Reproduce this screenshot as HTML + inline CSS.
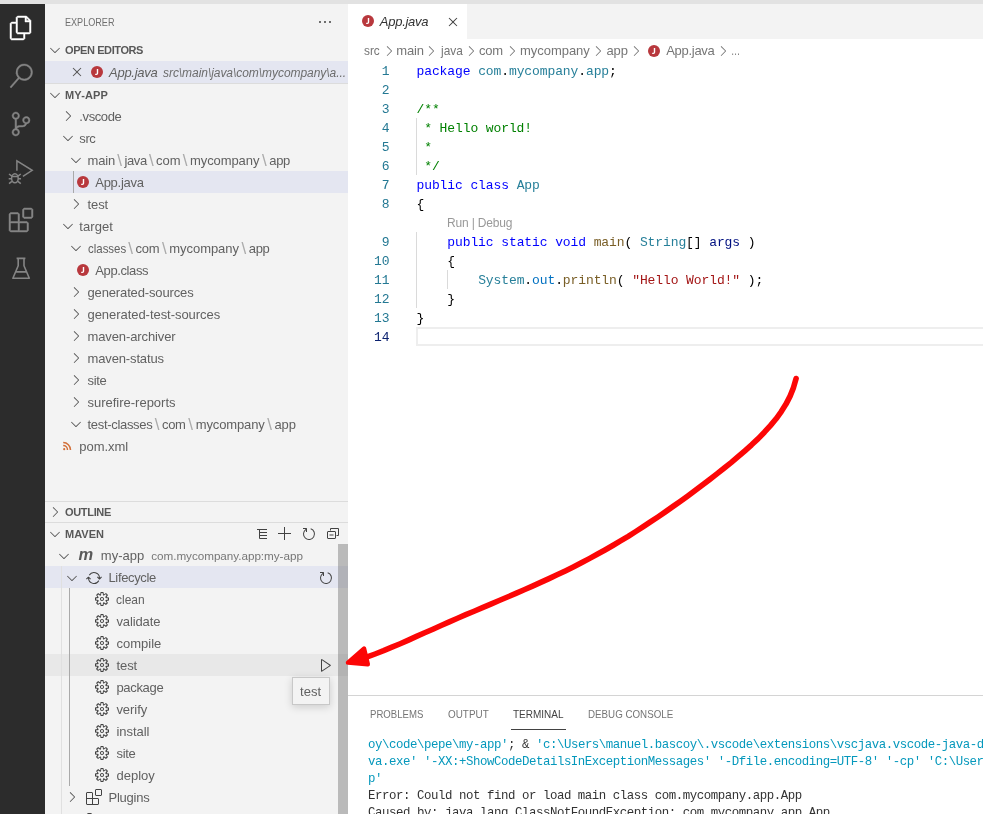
<!DOCTYPE html>
<html lang="en"><head><meta charset="utf-8"><title>VS Code - Maven</title>
<style>
html,body{margin:0;padding:0}
body{width:983px;height:814px;position:relative;overflow:hidden;background:#ffffff;font-family:"Liberation Sans", sans-serif;}
#bg,#fg{position:absolute;left:0;top:0;width:983px;height:814px;overflow:hidden}
#fg{will-change:transform}
.r{position:absolute}
.ic{position:absolute;display:block;overflow:visible}
.t{position:absolute;white-space:pre;line-height:22px;height:22px}
.ln{position:absolute;left:350px;width:39.5px;text-align:right;font-family:"Liberation Mono", monospace;font-size:13px;letter-spacing:-0.1px;line-height:19px;height:19px;white-space:pre}
.code{position:absolute;left:416.5px;font-family:"Liberation Mono", monospace;font-size:13px;letter-spacing:-0.1px;line-height:19px;height:19px;white-space:pre}
.term{position:absolute;left:368px;font-family:"Liberation Mono", monospace;font-size:12.4px;letter-spacing:-0.44px;line-height:17px;height:17px;white-space:pre}
</style></head>
<body>
<div id="bg">
<div class="r" style="left:0px;top:0px;width:983px;height:4px;background:#e2e2e2;"></div>
<div class="r" style="left:0px;top:4px;width:45px;height:810px;background:#2c2c2c;"></div>
<div class="r" style="left:45px;top:4px;width:303px;height:810px;background:#f3f3f3;"></div>
<div class="r" style="left:348px;top:4px;width:635px;height:35px;background:#f3f3f3;"></div>
<div class="r" style="left:348px;top:4px;width:119px;height:35px;background:#ffffff;"></div>
<div class="r" style="left:45px;top:61px;width:303px;height:22px;background:#e4e6f1;"></div>
<div class="r" style="left:45px;top:83px;width:303px;height:1px;background:#dcdcdc;"></div>
<div class="r" style="left:45px;top:171px;width:303px;height:22px;background:#e4e6f1;"></div>
<div class="r" style="left:73px;top:171px;width:1px;height:22px;background:#a9a9a9;"></div>
<div class="r" style="left:45px;top:501px;width:303px;height:1px;background:#dcdcdc;"></div>
<div class="r" style="left:45px;top:522px;width:303px;height:1px;background:#dcdcdc;"></div>
<div class="r" style="left:45px;top:566px;width:303px;height:22px;background:#e4e6f1;"></div>
<div class="r" style="left:45px;top:654px;width:303px;height:22px;background:#e8e8e8;"></div>
<div class="r" style="left:61px;top:566px;width:1px;height:248px;background:#e0e0e0;"></div>
<div class="r" style="left:69px;top:588px;width:1px;height:198px;background:#a9a9a9;"></div>
<div class="r" style="left:86.8px;top:812.6px;width:5.5px;height:3px;background:#424242;border-radius:1.5px 1.5px 0 0"></div>
<div class="r" style="left:338px;top:544px;width:10px;height:270px;background:rgba(100,100,100,0.4);"></div>
<div class="r" style="left:291.5px;top:676.5px;width:38px;height:28px;background:#f3f3f3;border:1px solid #c8c8c8;box-sizing:border-box;box-shadow:0 2px 8px rgba(0,0,0,0.16)"></div>
<div class="r" style="left:416px;top:327px;width:580px;height:19px;box-sizing:border-box;border:2px solid #eeeeee;"></div>
<div class="r" style="left:416px;top:118px;width:1px;height:57px;background:#dadada;"></div>
<div class="r" style="left:416px;top:232px;width:1px;height:76px;background:#dadada;"></div>
<div class="r" style="left:447px;top:270px;width:1px;height:19px;background:#dadada;"></div>
<div class="r" style="left:348px;top:695px;width:635px;height:1px;background:#d4d4d4;"></div>
<div class="r" style="left:511px;top:729px;width:55px;height:1px;background:#424242;"></div>
</div>
<div id="fg">
<svg class="ic" style="left:9px;top:16px" viewBox="0 0 24 24" width="24" height="24"><path fill="#ffffff" stroke="#ffffff" stroke-width="0.45" d="M17.5 0h-9L7 1.5V6H2.5L1 7.5v15.07L2.5 24h12.07L16 22.57V18h4.7l1.3-1.43V4.5L17.5 0zm0 2.12l2.38 2.38H17.5V2.12zm-3 20.38h-12v-15H7v9.07L8.5 18h6v4.5zm6-6h-12v-15H16V6h4.5v10.5z"/></svg>
<svg class="ic" style="left:9px;top:64px" viewBox="0 0 24 24" width="24" height="24"><path fill="#858585" stroke="#858585" stroke-width="0.45" d="M15.25 0a8.25 8.25 0 0 0-6.18 13.72L1 22.88l1.12 1 8.05-9.12A8.251 8.251 0 1 0 15.25.01V0zm0 15a6.75 6.75 0 1 1 0-13.5 6.75 6.75 0 0 1 0 13.5z"/></svg>
<svg class="ic" style="left:9px;top:112px" viewBox="0 0 24 24" width="24" height="24"><path fill="#858585" stroke="#858585" stroke-width="0.45" d="M21.007 8.222A3.738 3.738 0 0 0 15.045 5.2a3.737 3.737 0 0 0 1.156 6.583 2.988 2.988 0 0 1-2.668 1.67h-2.99a4.456 4.456 0 0 0-2.989 1.165V7.4a3.737 3.737 0 1 0-1.494 0v9.117a3.776 3.776 0 1 0 1.816.099 2.99 2.99 0 0 1 2.668-1.667h2.99a4.484 4.484 0 0 0 4.223-3.039 3.736 3.736 0 0 0 3.25-3.687zM4.565 3.738a2.242 2.242 0 1 1 4.484 0 2.242 2.242 0 0 1-4.484 0zm4.484 16.441a2.242 2.242 0 1 1-4.484 0 2.242 2.242 0 0 1 4.484 0zm8.221-9.715a2.242 2.242 0 1 1 0-4.485 2.242 2.242 0 0 1 0 4.485z"/></svg>
<svg class="ic" style="left:9px;top:159px" viewBox="0 0 24 24" width="24" height="24" fill="none" stroke="#858585" stroke-width="1.5"><path d="M7.900 11.800V1.800l15.300 9.500-9.300 6"/><ellipse cx="5.900" cy="19.300" rx="3.300" ry="4.500"/><path d="M2.800 17.600h6.200M-0.300 19.800h3M9 19.800h3M0 15l2.900 2.200M11.800 15L8.900 17.200M0 24.600l2.900-2.200M11.800 24.600L8.900 22.400"/></svg>
<svg class="ic" style="left:9px;top:207.6px" viewBox="0 0 24 24" width="24" height="24"><path fill="#858585" stroke="#858585" stroke-width="0.45" d="M13.5 1.5L15 0h7.5L24 1.5V9l-1.5 1.5H15L13.500 9V1.500zm1.500 0V9h7.500V1.500H15zM0 15V6l1.500-1.500H9L10.500 6v7.500H18l1.500 1.500v7.500L18 24H1.500L0 22.500V15zm9-1.500V6H1.500v7.500H9zM9 15H1.500v7.500H9V15zm1.500 7.500H18V15h-7.500v7.500z"/></svg>
<svg class="ic" style="left:9px;top:255.500px" viewBox="0 0 24 24" width="24" height="24" fill="none" stroke="#858585" stroke-width="1.6" stroke-linejoin="round"><path d="M7.600 2.400h8.800M9.200 2.400v7.400L3.900 22.300h16.400L15 9.800V2.400M6.500 15.900h11.200"/></svg>
<div class="t " style="left:65.4px;top:11.100000000000001px;font-size:11px;color:#6f6f6f;transform:scaleX(0.8261);transform-origin:0 50%;">EXPLORER</div>
<svg class="ic" style="left:317px;top:14.3px" viewBox="0 0 16 16" width="16" height="16"><path fill="#424242" d="M4 8a1 1 0 1 1-2 0 1 1 0 0 1 2 0zm5 0a1 1 0 1 1-2 0 1 1 0 0 1 2 0zm5 0a1 1 0 1 1-2 0 1 1 0 0 1 2 0z"/></svg>
<svg class="ic" style="left:47px;top:42px" viewBox="0 0 16 16" width="16" height="16"><path fill="#5a5a5a" d="M7.976 10.072l4.357-4.357.62.618L8.284 11h-.618L3 6.333l.619-.618 4.357 4.357z"/></svg>
<div class="t " style="left:65px;top:38.8px;font-size:11px;color:#585858;letter-spacing:-0.411px;font-weight:bold;">OPEN EDITORS</div>
<svg class="ic" style="left:69px;top:64px" viewBox="0 0 16 16" width="16" height="16"><path fill="#555555" d="M8 8.707l3.646 3.647.708-.707L8.707 8l3.647-3.646-.707-.708L8 7.293 4.354 3.646l-.707.708L7.293 8l-3.646 3.646.707.708L8 8.707z"/></svg>
<svg class="ic" style="left:89px;top:64px" viewBox="0 0 16 16" width="16" height="16"><circle cx="8" cy="8" r="6" fill="#b8383d"/><path d="M9.200 5v4.100c0 1.300-.7 1.950-1.900 1.950-.5 0-.9-.08-1.250-.25l.25-1.150c.25.120.5.200.8.200.45 0 .7-.2.7-.85V5z" fill="#fff"/></svg>
<div class="t " style="left:109px;top:61.8px;font-size:13px;color:#616161;letter-spacing:-0.262px;font-style:italic;">App.java</div>
<div class="t " style="left:163px;top:62.0px;font-size:12px;color:#6c6c6c;letter-spacing:-0.054px;font-style:italic;">src\main\java\com\mycompany\a...</div>
<svg class="ic" style="left:47px;top:87.2px" viewBox="0 0 16 16" width="16" height="16"><path fill="#5a5a5a" d="M7.976 10.072l4.357-4.357.62.618L8.284 11h-.618L3 6.333l.619-.618 4.357 4.357z"/></svg>
<div class="t " style="left:65px;top:84.0px;font-size:11px;color:#585858;letter-spacing:0.119px;font-weight:bold;">MY-APP</div>
<svg class="ic" style="left:59.5px;top:108px" viewBox="0 0 16 16" width="16" height="16"><path fill="#555555" d="M10.072 8.024L5.715 3.667l.618-.62L11 7.716v.618L6.333 13l-.618-.619 4.357-4.357z"/></svg>
<div class="t " style="left:79.3px;top:105.8px;font-size:13px;color:#616161;letter-spacing:-0.387px;">.vscode</div>
<svg class="ic" style="left:59.5px;top:130px" viewBox="0 0 16 16" width="16" height="16"><path fill="#555555" d="M7.976 10.072l4.357-4.357.62.618L8.284 11h-.618L3 6.333l.619-.618 4.357 4.357z"/></svg>
<div class="t " style="left:79.3px;top:127.8px;font-size:13px;color:#616161;letter-spacing:-0.381px;">src</div>
<svg class="ic" style="left:68px;top:152px" viewBox="0 0 16 16" width="16" height="16"><path fill="#555555" d="M7.976 10.072l4.357-4.357.62.618L8.284 11h-.618L3 6.333l.619-.618 4.357 4.357z"/></svg>
<div class="t " style="left:87.5px;top:149.8px;font-size:13px;color:#616161;letter-spacing:-0.147px;">main</div>
<div class="t " style="left:124.4px;top:149.8px;font-size:13px;color:#616161;letter-spacing:-0.34px;">java</div>
<div class="t" style="left:117.3px;top:150px;font-size:17px;color:#ababab">\</div>
<div class="t " style="left:156.1px;top:149.8px;font-size:13px;color:#616161;letter-spacing:-0.087px;">com</div>
<div class="t" style="left:149.1px;top:150px;font-size:17px;color:#ababab">\</div>
<div class="t " style="left:190px;top:149.8px;font-size:13px;color:#616161;letter-spacing:-0.086px;">mycompany</div>
<div class="t" style="left:182.8px;top:150px;font-size:17px;color:#ababab">\</div>
<div class="t " style="left:269.3px;top:149.8px;font-size:13px;color:#616161;letter-spacing:-0.401px;">app</div>
<div class="t" style="left:261.9px;top:150px;font-size:17px;color:#ababab">\</div>
<svg class="ic" style="left:75px;top:174px" viewBox="0 0 16 16" width="16" height="16"><circle cx="8" cy="8" r="6" fill="#b8383d"/><path d="M9.200 5v4.100c0 1.300-.7 1.950-1.900 1.950-.5 0-.9-.08-1.250-.25l.25-1.150c.25.120.5.200.8.200.45 0 .7-.2.7-.85V5z" fill="#fff"/></svg>
<div class="t " style="left:95.3px;top:171.8px;font-size:13px;color:#616161;letter-spacing:-0.287px;">App.java</div>
<svg class="ic" style="left:68px;top:196px" viewBox="0 0 16 16" width="16" height="16"><path fill="#555555" d="M10.072 8.024L5.715 3.667l.618-.62L11 7.716v.618L6.333 13l-.618-.619 4.357-4.357z"/></svg>
<div class="t " style="left:87.5px;top:193.8px;font-size:13px;color:#616161;letter-spacing:-0.092px;">test</div>
<svg class="ic" style="left:59.5px;top:218px" viewBox="0 0 16 16" width="16" height="16"><path fill="#555555" d="M7.976 10.072l4.357-4.357.62.618L8.284 11h-.618L3 6.333l.619-.618 4.357 4.357z"/></svg>
<div class="t " style="left:79.3px;top:215.8px;font-size:13px;color:#616161;letter-spacing:0.058px;">target</div>
<svg class="ic" style="left:68px;top:240px" viewBox="0 0 16 16" width="16" height="16"><path fill="#555555" d="M7.976 10.072l4.357-4.357.62.618L8.284 11h-.618L3 6.333l.619-.618 4.357 4.357z"/></svg>
<div class="t " style="left:87.5px;top:237.8px;font-size:13px;color:#616161;transform:scaleX(0.8810);transform-origin:0 50%;">classes</div>
<div class="t " style="left:135.5px;top:237.8px;font-size:13px;color:#616161;letter-spacing:-0.254px;">com</div>
<div class="t" style="left:128.2px;top:238px;font-size:17px;color:#ababab">\</div>
<div class="t " style="left:169.3px;top:237.8px;font-size:13px;color:#616161;letter-spacing:-0.053px;">mycompany</div>
<div class="t" style="left:161.9px;top:238px;font-size:17px;color:#ababab">\</div>
<div class="t " style="left:248.7px;top:237.8px;font-size:13px;color:#616161;letter-spacing:-0.268px;">app</div>
<div class="t" style="left:241.4px;top:238px;font-size:17px;color:#ababab">\</div>
<svg class="ic" style="left:75px;top:262px" viewBox="0 0 16 16" width="16" height="16"><circle cx="8" cy="8" r="6" fill="#b8383d"/><path d="M9.200 5v4.100c0 1.300-.7 1.950-1.900 1.950-.5 0-.9-.08-1.250-.25l.25-1.150c.25.120.5.200.8.200.45 0 .7-.2.7-.85V5z" fill="#fff"/></svg>
<div class="t " style="left:95.3px;top:259.8px;font-size:13px;color:#616161;letter-spacing:-0.397px;">App.class</div>
<svg class="ic" style="left:68px;top:284px" viewBox="0 0 16 16" width="16" height="16"><path fill="#555555" d="M10.072 8.024L5.715 3.667l.618-.62L11 7.716v.618L6.333 13l-.618-.619 4.357-4.357z"/></svg>
<div class="t " style="left:87.5px;top:281.8px;font-size:13px;color:#616161;letter-spacing:-0.142px;">generated-sources</div>
<svg class="ic" style="left:68px;top:306px" viewBox="0 0 16 16" width="16" height="16"><path fill="#555555" d="M10.072 8.024L5.715 3.667l.618-.62L11 7.716v.618L6.333 13l-.618-.619 4.357-4.357z"/></svg>
<div class="t " style="left:87.5px;top:303.8px;font-size:13px;color:#616161;letter-spacing:-0.049px;">generated-test-sources</div>
<svg class="ic" style="left:68px;top:328px" viewBox="0 0 16 16" width="16" height="16"><path fill="#555555" d="M10.072 8.024L5.715 3.667l.618-.62L11 7.716v.618L6.333 13l-.618-.619 4.357-4.357z"/></svg>
<div class="t " style="left:87.5px;top:325.8px;font-size:13px;color:#616161;letter-spacing:-0.114px;">maven-archiver</div>
<svg class="ic" style="left:68px;top:350px" viewBox="0 0 16 16" width="16" height="16"><path fill="#555555" d="M10.072 8.024L5.715 3.667l.618-.62L11 7.716v.618L6.333 13l-.618-.619 4.357-4.357z"/></svg>
<div class="t " style="left:87.5px;top:347.8px;font-size:13px;color:#616161;letter-spacing:-0.137px;">maven-status</div>
<svg class="ic" style="left:68px;top:372px" viewBox="0 0 16 16" width="16" height="16"><path fill="#555555" d="M10.072 8.024L5.715 3.667l.618-.62L11 7.716v.618L6.333 13l-.618-.619 4.357-4.357z"/></svg>
<div class="t " style="left:87.5px;top:369.8px;font-size:13px;color:#616161;letter-spacing:-0.309px;">site</div>
<svg class="ic" style="left:68px;top:394px" viewBox="0 0 16 16" width="16" height="16"><path fill="#555555" d="M10.072 8.024L5.715 3.667l.618-.62L11 7.716v.618L6.333 13l-.618-.619 4.357-4.357z"/></svg>
<div class="t " style="left:87.5px;top:391.8px;font-size:13px;color:#616161;letter-spacing:-0.009px;">surefire-reports</div>
<svg class="ic" style="left:68px;top:416px" viewBox="0 0 16 16" width="16" height="16"><path fill="#555555" d="M7.976 10.072l4.357-4.357.62.618L8.284 11h-.618L3 6.333l.619-.618 4.357 4.357z"/></svg>
<div class="t " style="left:87.5px;top:413.8px;font-size:13px;color:#616161;letter-spacing:-0.312px;">test-classes</div>
<div class="t " style="left:161.9px;top:413.8px;font-size:13px;color:#616161;letter-spacing:-0.254px;">com</div>
<div class="t" style="left:154.8px;top:414px;font-size:17px;color:#ababab">\</div>
<div class="t " style="left:195.7px;top:413.8px;font-size:13px;color:#616161;letter-spacing:-0.12px;">mycompany</div>
<div class="t" style="left:188.3px;top:414px;font-size:17px;color:#ababab">\</div>
<div class="t " style="left:274.5px;top:413.8px;font-size:13px;color:#616161;letter-spacing:-0.134px;">app</div>
<div class="t" style="left:267.2px;top:414px;font-size:17px;color:#ababab">\</div>
<svg class="ic" style="left:58.5px;top:438px" viewBox="0 0 16 16" width="16" height="16" fill="none" stroke="#d2703a" stroke-width="1.5"><circle cx="5.2" cy="11.2" r="1.1" fill="#d2703a" stroke="none"/><path d="M4.2 7.6a4.3 4.3 0 0 1 4.3 4.3"/><path d="M4.2 4.6a7.3 7.3 0 0 1 7.3 7.3"/></svg>
<div class="t " style="left:79.3px;top:435.8px;font-size:13px;color:#616161;letter-spacing:-0.032px;">pom.xml</div>
<svg class="ic" style="left:47px;top:504px" viewBox="0 0 16 16" width="16" height="16"><path fill="#5a5a5a" d="M10.072 8.024L5.715 3.667l.618-.62L11 7.716v.618L6.333 13l-.618-.619 4.357-4.357z"/></svg>
<div class="t " style="left:65px;top:500.8px;font-size:11px;color:#585858;letter-spacing:-0.326px;font-weight:bold;">OUTLINE</div>
<svg class="ic" style="left:47px;top:526px" viewBox="0 0 16 16" width="16" height="16"><path fill="#5a5a5a" d="M7.976 10.072l4.357-4.357.62.618L8.284 11h-.618L3 6.333l.619-.618 4.357 4.357z"/></svg>
<div class="t " style="left:65px;top:522.8px;font-size:11px;color:#585858;letter-spacing:0.016px;font-weight:bold;">MAVEN</div>
<svg class="ic" style="left:254px;top:526px" viewBox="0 0 16 16" width="16" height="16" fill="none" stroke="#424242" stroke-width="1"><path d="M3 3.500h10M5.500 6.500H13M5.500 9.500H13M5.500 12.500H13M5.500 3.500v9"/></svg>
<svg class="ic" style="left:277px;top:526px" viewBox="0 0 16 16" width="16" height="16"><path fill="#424242" d="M14 7v1H8v6H7V8H1V7h6V1h1v6h6z"/></svg>
<svg class="ic" style="left:301px;top:526px" viewBox="0 0 16 16" width="16" height="16"><path fill="#424242" d="M4.681 3H2V2h3.5l.5.5V6H5V4a5 5 0 1 0 4.53-.761l.302-.954A6 6 0 1 1 4.681 3z"/></svg>
<svg class="ic" style="left:325px;top:526px" viewBox="0 0 16 16" width="16" height="16" fill="none" stroke="#424242" stroke-width="1"><path d="M5.500 4.500v-2h8v7h-2"/><rect x="2.500" y="5.500" width="8" height="7" rx=".5"/><path d="M4.500 9h4"/></svg>
<svg class="ic" style="left:56px;top:547.5px" viewBox="0 0 16 16" width="16" height="16"><path fill="#555555" d="M7.976 10.072l4.357-4.357.62.618L8.284 11h-.618L3 6.333l.619-.618 4.357 4.357z"/></svg>
<div class="t" style="left:78.500px;top:544px;font-size:16.5px;font-weight:bold;font-style:italic;color:#5a5a5a;line-height:20px">m</div>
<div class="t " style="left:100.8px;top:545.3px;font-size:13px;color:#616161;letter-spacing:0.007px;">my-app</div>
<div class="t " style="left:151.2px;top:544.8px;font-size:11.7px;color:#777;letter-spacing:-0.031px;">com.mycompany.app:my-app</div>
<svg class="ic" style="left:64px;top:569.5px" viewBox="0 0 16 16" width="16" height="16"><path fill="#555555" d="M7.976 10.072l4.357-4.357.62.618L8.284 11h-.618L3 6.333l.619-.618 4.357 4.357z"/></svg>
<svg class="ic" style="left:86.3px;top:569.5px" viewBox="0 0 16 16" width="16" height="16"><path fill="#424242" d="M2.006 8.267L.78 9.5 0 8.73l2.09-2.07.76.01 2.09 2.12-.76.76-1.167-1.18a5 5 0 0 0 9.4 1.983l.813.597a6 6 0 0 1-11.22-2.683zm10.99-.466L11.76 6.55l-.76.76 2.09 2.11.76.01 2.09-2.07-.75-.76-1.194 1.18a6 6 0 0 0-11.11-2.92l.81.594a5 5 0 0 1 9.3 2.346z"/></svg>
<div class="t " style="left:108.5px;top:567.3px;font-size:13px;color:#616161;letter-spacing:-0.364px;">Lifecycle</div>
<svg class="ic" style="left:317.6px;top:569.5px" viewBox="0 0 16 16" width="16" height="16"><path fill="#424242" d="M4.681 3H2V2h3.5l.5.5V6H5V4a5 5 0 1 0 4.53-.761l.302-.954A6 6 0 1 1 4.681 3z"/></svg>
<svg class="ic" style="left:94px;top:590.7px" viewBox="0 0 16 16" width="16" height="16"><path fill="#424242" d="M9.1 4.4L8.6 2H7.4l-.5 2.4-.7.3-2-1.3-.9.8 1.3 2-.2.7-2.4.5v1.2l2.4.5.3.8-1.3 2 .8.8 2-1.3.8.3.4 2.3h1.2l.5-2.4.8-.3 2 1.3.8-.8-1.3-2 .3-.8 2.3-.4V7.4l-2.4-.5-.3-.8 1.3-2-.8-.8-2 1.3-.7-.2zM9.4 1l.5 2.4L12 2.1l2 2-1.4 2.1 2.4.4v2.8l-2.4.5L14 12l-2 2-2.1-1.4-.5 2.4H6.6l-.5-2.4L4 13.9l-2-2 1.4-2.1L1 9.4V6.6l2.4-.5L2.1 4l2-2 2.1 1.4.4-2.4h2.8zm.6 7c0 1.1-.9 2-2 2s-2-.9-2-2 .9-2 2-2 2 .9 2 2zM8 9c.6 0 1-.4 1-1s-.4-1-1-1-1 .4-1 1 .4 1 1 1z"/></svg>
<div class="t " style="left:116.4px;top:588.9px;font-size:13px;color:#616161;transform:scaleX(0.9235);transform-origin:0 50%;">clean</div>
<svg class="ic" style="left:94px;top:612.7px" viewBox="0 0 16 16" width="16" height="16"><path fill="#424242" d="M9.1 4.4L8.6 2H7.4l-.5 2.4-.7.3-2-1.3-.9.8 1.3 2-.2.7-2.4.5v1.2l2.4.5.3.8-1.3 2 .8.8 2-1.3.8.3.4 2.3h1.2l.5-2.4.8-.3 2 1.3.8-.8-1.3-2 .3-.8 2.3-.4V7.4l-2.4-.5-.3-.8 1.3-2-.8-.8-2 1.3-.7-.2zM9.4 1l.5 2.4L12 2.1l2 2-1.4 2.1 2.4.4v2.8l-2.4.5L14 12l-2 2-2.1-1.4-.5 2.4H6.6l-.5-2.4L4 13.9l-2-2 1.4-2.1L1 9.4V6.6l2.4-.5L2.1 4l2-2 2.1 1.4.4-2.4h2.8zm.6 7c0 1.1-.9 2-2 2s-2-.9-2-2 .9-2 2-2 2 .9 2 2zM8 9c.6 0 1-.4 1-1s-.4-1-1-1-1 .4-1 1 .4 1 1 1z"/></svg>
<div class="t " style="left:116.4px;top:610.9px;font-size:13px;color:#616161;letter-spacing:-0.114px;">validate</div>
<svg class="ic" style="left:94px;top:634.7px" viewBox="0 0 16 16" width="16" height="16"><path fill="#424242" d="M9.1 4.4L8.6 2H7.4l-.5 2.4-.7.3-2-1.3-.9.8 1.3 2-.2.7-2.4.5v1.2l2.4.5.3.8-1.3 2 .8.8 2-1.3.8.3.4 2.3h1.2l.5-2.4.8-.3 2 1.3.8-.8-1.3-2 .3-.8 2.3-.4V7.4l-2.4-.5-.3-.8 1.3-2-.8-.8-2 1.3-.7-.2zM9.4 1l.5 2.4L12 2.1l2 2-1.4 2.1 2.4.4v2.8l-2.4.5L14 12l-2 2-2.1-1.4-.5 2.4H6.6l-.5-2.4L4 13.9l-2-2 1.4-2.1L1 9.4V6.6l2.4-.5L2.1 4l2-2 2.1 1.4.4-2.4h2.8zm.6 7c0 1.1-.9 2-2 2s-2-.9-2-2 .9-2 2-2 2 .9 2 2zM8 9c.6 0 1-.4 1-1s-.4-1-1-1-1 .4-1 1 .4 1 1 1z"/></svg>
<div class="t " style="left:116.4px;top:632.9px;font-size:13px;color:#616161;letter-spacing:0.015px;">compile</div>
<svg class="ic" style="left:94px;top:656.7px" viewBox="0 0 16 16" width="16" height="16"><path fill="#424242" d="M9.1 4.4L8.6 2H7.4l-.5 2.4-.7.3-2-1.3-.9.8 1.3 2-.2.7-2.4.5v1.2l2.4.5.3.8-1.3 2 .8.8 2-1.3.8.3.4 2.3h1.2l.5-2.4.8-.3 2 1.3.8-.8-1.3-2 .3-.8 2.3-.4V7.4l-2.4-.5-.3-.8 1.3-2-.8-.8-2 1.3-.7-.2zM9.4 1l.5 2.4L12 2.1l2 2-1.4 2.1 2.4.4v2.8l-2.4.5L14 12l-2 2-2.1-1.4-.5 2.4H6.6l-.5-2.4L4 13.9l-2-2 1.4-2.1L1 9.4V6.6l2.4-.5L2.1 4l2-2 2.1 1.4.4-2.4h2.8zm.6 7c0 1.1-.9 2-2 2s-2-.9-2-2 .9-2 2-2 2 .9 2 2zM8 9c.6 0 1-.4 1-1s-.4-1-1-1-1 .4-1 1 .4 1 1 1z"/></svg>
<div class="t " style="left:116.4px;top:654.9px;font-size:13px;color:#616161;letter-spacing:-0.042px;">test</div>
<svg class="ic" style="left:94px;top:678.7px" viewBox="0 0 16 16" width="16" height="16"><path fill="#424242" d="M9.1 4.4L8.6 2H7.4l-.5 2.4-.7.3-2-1.3-.9.8 1.3 2-.2.7-2.4.5v1.2l2.4.5.3.8-1.3 2 .8.8 2-1.3.8.3.4 2.3h1.2l.5-2.4.8-.3 2 1.3.8-.8-1.3-2 .3-.8 2.3-.4V7.4l-2.4-.5-.3-.8 1.3-2-.8-.8-2 1.3-.7-.2zM9.4 1l.5 2.4L12 2.1l2 2-1.4 2.1 2.4.4v2.8l-2.4.5L14 12l-2 2-2.1-1.4-.5 2.4H6.6l-.5-2.4L4 13.9l-2-2 1.4-2.1L1 9.4V6.6l2.4-.5L2.1 4l2-2 2.1 1.4.4-2.4h2.8zm.6 7c0 1.1-.9 2-2 2s-2-.9-2-2 .9-2 2-2 2 .9 2 2zM8 9c.6 0 1-.4 1-1s-.4-1-1-1-1 .4-1 1 .4 1 1 1z"/></svg>
<div class="t " style="left:116.4px;top:676.9px;font-size:13px;color:#616161;letter-spacing:-0.308px;">package</div>
<svg class="ic" style="left:94px;top:700.7px" viewBox="0 0 16 16" width="16" height="16"><path fill="#424242" d="M9.1 4.4L8.6 2H7.4l-.5 2.4-.7.3-2-1.3-.9.8 1.3 2-.2.7-2.4.5v1.2l2.4.5.3.8-1.3 2 .8.8 2-1.3.8.3.4 2.3h1.2l.5-2.4.8-.3 2 1.3.8-.8-1.3-2 .3-.8 2.3-.4V7.4l-2.4-.5-.3-.8 1.3-2-.8-.8-2 1.3-.7-.2zM9.4 1l.5 2.4L12 2.1l2 2-1.4 2.1 2.4.4v2.8l-2.4.5L14 12l-2 2-2.1-1.4-.5 2.4H6.6l-.5-2.4L4 13.9l-2-2 1.4-2.1L1 9.4V6.6l2.4-.5L2.1 4l2-2 2.1 1.4.4-2.4h2.8zm.6 7c0 1.1-.9 2-2 2s-2-.9-2-2 .9-2 2-2 2 .9 2 2zM8 9c.6 0 1-.4 1-1s-.4-1-1-1-1 .4-1 1 .4 1 1 1z"/></svg>
<div class="t " style="left:116.4px;top:698.9px;font-size:13px;color:#616161;letter-spacing:-0.044px;">verify</div>
<svg class="ic" style="left:94px;top:722.7px" viewBox="0 0 16 16" width="16" height="16"><path fill="#424242" d="M9.1 4.4L8.6 2H7.4l-.5 2.4-.7.3-2-1.3-.9.8 1.3 2-.2.7-2.4.5v1.2l2.4.5.3.8-1.3 2 .8.8 2-1.3.8.3.4 2.3h1.2l.5-2.4.8-.3 2 1.3.8-.8-1.3-2 .3-.8 2.3-.4V7.4l-2.4-.5-.3-.8 1.3-2-.8-.8-2 1.3-.7-.2zM9.4 1l.5 2.4L12 2.1l2 2-1.4 2.1 2.4.4v2.8l-2.4.5L14 12l-2 2-2.1-1.4-.5 2.4H6.6l-.5-2.4L4 13.9l-2-2 1.4-2.1L1 9.4V6.6l2.4-.5L2.1 4l2-2 2.1 1.4.4-2.4h2.8zm.6 7c0 1.1-.9 2-2 2s-2-.9-2-2 .9-2 2-2 2 .9 2 2zM8 9c.6 0 1-.4 1-1s-.4-1-1-1-1 .4-1 1 .4 1 1 1z"/></svg>
<div class="t " style="left:116.4px;top:720.9px;font-size:13px;color:#616161;letter-spacing:-0.036px;">install</div>
<svg class="ic" style="left:94px;top:744.7px" viewBox="0 0 16 16" width="16" height="16"><path fill="#424242" d="M9.1 4.4L8.6 2H7.4l-.5 2.4-.7.3-2-1.3-.9.8 1.3 2-.2.7-2.4.5v1.2l2.4.5.3.8-1.3 2 .8.8 2-1.3.8.3.4 2.3h1.2l.5-2.4.8-.3 2 1.3.8-.8-1.3-2 .3-.8 2.3-.4V7.4l-2.4-.5-.3-.8 1.3-2-.8-.8-2 1.3-.7-.2zM9.4 1l.5 2.4L12 2.1l2 2-1.4 2.1 2.4.4v2.8l-2.4.5L14 12l-2 2-2.1-1.4-.5 2.4H6.6l-.5-2.4L4 13.9l-2-2 1.4-2.1L1 9.4V6.6l2.4-.5L2.1 4l2-2 2.1 1.4.4-2.4h2.8zm.6 7c0 1.1-.9 2-2 2s-2-.9-2-2 .9-2 2-2 2 .9 2 2zM8 9c.6 0 1-.4 1-1s-.4-1-1-1-1 .4-1 1 .4 1 1 1z"/></svg>
<div class="t " style="left:116.4px;top:742.9px;font-size:13px;color:#616161;letter-spacing:-0.259px;">site</div>
<svg class="ic" style="left:94px;top:766.7px" viewBox="0 0 16 16" width="16" height="16"><path fill="#424242" d="M9.1 4.4L8.6 2H7.4l-.5 2.4-.7.3-2-1.3-.9.8 1.3 2-.2.7-2.4.5v1.2l2.4.5.3.8-1.3 2 .8.8 2-1.3.8.3.4 2.3h1.2l.5-2.4.8-.3 2 1.3.8-.8-1.3-2 .3-.8 2.3-.4V7.4l-2.4-.5-.3-.8 1.3-2-.8-.8-2 1.3-.7-.2zM9.4 1l.5 2.4L12 2.1l2 2-1.4 2.1 2.4.4v2.8l-2.4.5L14 12l-2 2-2.1-1.4-.5 2.4H6.6l-.5-2.4L4 13.9l-2-2 1.4-2.1L1 9.4V6.6l2.4-.5L2.1 4l2-2 2.1 1.4.4-2.4h2.8zm.6 7c0 1.1-.9 2-2 2s-2-.9-2-2 .9-2 2-2 2 .9 2 2zM8 9c.6 0 1-.4 1-1s-.4-1-1-1-1 .4-1 1 .4 1 1 1z"/></svg>
<div class="t " style="left:116.4px;top:764.9px;font-size:13px;color:#616161;letter-spacing:0.031px;">deploy</div>
<svg class="ic" style="left:318px;top:656.6px" viewBox="0 0 16 16" width="16" height="16"><path fill="#424242" d="M3.78 2L3 2.41v12l.78.42 9-6V8l-9-6zM4 13.48V3.35l7.6 5.07L4 13.48z"/></svg>
<svg class="ic" style="left:64.3px;top:788.6px" viewBox="0 0 16 16" width="16" height="16"><path fill="#555555" d="M10.072 8.024L5.715 3.667l.618-.62L11 7.716v.618L6.333 13l-.618-.619 4.357-4.357z"/></svg>
<svg class="ic" style="left:86.3px;top:788.5px" viewBox="0 0 24 24" width="16" height="16"><path fill="#424242" d="M13.5 1.5L15 0h7.5L24 1.5V9l-1.5 1.5H15L13.500 9V1.500zm1.500 0V9h7.500V1.500H15zM0 15V6l1.500-1.500H9L10.500 6v7.500H18l1.500 1.500v7.500L18 24H1.500L0 22.500V15zm9-1.500V6H1.500v7.500H9zM9 15H1.500v7.500H9V15zm1.500 7.500H18V15h-7.500v7.500z"/></svg>
<div class="t " style="left:108.5px;top:786.9px;font-size:13px;color:#616161;letter-spacing:-0.249px;">Plugins</div>
<div class="t " style="left:300.1px;top:681.3px;font-size:13px;color:#616161;letter-spacing:0.033px;">test</div>
<svg class="ic" style="left:360px;top:13.2px" viewBox="0 0 16 16" width="16" height="16"><circle cx="8" cy="8" r="6" fill="#b8383d"/><path d="M9.200 5v4.100c0 1.300-.7 1.950-1.900 1.950-.5 0-.9-.08-1.250-.25l.25-1.150c.25.120.5.200.8.200.45 0 .7-.2.7-.85V5z" fill="#fff"/></svg>
<div class="t " style="left:379.8px;top:11.3px;font-size:13px;color:#333333;letter-spacing:-0.262px;font-style:italic;">App.java</div>
<svg class="ic" style="left:445px;top:13.5px" viewBox="0 0 16 16" width="16" height="16"><path fill="#424242" d="M8 8.707l3.646 3.647.708-.707L8.707 8l3.647-3.646-.707-.708L8 7.293 4.354 3.646l-.707.708L7.293 8l-3.646 3.646.707.708L8 8.707z"/></svg>
<div class="t " style="left:364.1px;top:40.3px;font-size:13px;color:#767676;transform:scaleX(0.9110);transform-origin:0 50%;">src</div>
<div class="t " style="left:396.2px;top:40.3px;font-size:13px;color:#767676;letter-spacing:-0.122px;">main</div>
<div class="t " style="left:440.6px;top:40.3px;font-size:13px;color:#767676;transform:scaleX(0.9137);transform-origin:0 50%;">java</div>
<div class="t " style="left:479px;top:40.3px;font-size:13px;color:#767676;letter-spacing:-0.188px;">com</div>
<div class="t " style="left:520.1px;top:40.3px;font-size:13px;color:#767676;letter-spacing:-0.053px;">mycompany</div>
<div class="t " style="left:606.4px;top:40.3px;font-size:13px;color:#767676;letter-spacing:-0.101px;">app</div>
<div class="t " style="left:666.2px;top:40.3px;font-size:13px;color:#767676;letter-spacing:-0.287px;">App.java</div>
<svg class="ic" style="left:380.5px;top:42.5px" viewBox="0 0 16 16" width="16" height="16"><path fill="#767676" d="M10.072 8.024L5.715 3.667l.618-.62L11 7.716v.618L6.333 13l-.618-.619 4.357-4.357z"/></svg>
<svg class="ic" style="left:423.2px;top:42.5px" viewBox="0 0 16 16" width="16" height="16"><path fill="#767676" d="M10.072 8.024L5.715 3.667l.618-.62L11 7.716v.618L6.333 13l-.618-.619 4.357-4.357z"/></svg>
<svg class="ic" style="left:462.9px;top:42.5px" viewBox="0 0 16 16" width="16" height="16"><path fill="#767676" d="M10.072 8.024L5.715 3.667l.618-.62L11 7.716v.618L6.333 13l-.618-.619 4.357-4.357z"/></svg>
<svg class="ic" style="left:503.5px;top:42.5px" viewBox="0 0 16 16" width="16" height="16"><path fill="#767676" d="M10.072 8.024L5.715 3.667l.618-.62L11 7.716v.618L6.333 13l-.618-.619 4.357-4.357z"/></svg>
<svg class="ic" style="left:589.9px;top:42.5px" viewBox="0 0 16 16" width="16" height="16"><path fill="#767676" d="M10.072 8.024L5.715 3.667l.618-.62L11 7.716v.618L6.333 13l-.618-.619 4.357-4.357z"/></svg>
<svg class="ic" style="left:627.5px;top:42.5px" viewBox="0 0 16 16" width="16" height="16"><path fill="#767676" d="M10.072 8.024L5.715 3.667l.618-.62L11 7.716v.618L6.333 13l-.618-.619 4.357-4.357z"/></svg>
<svg class="ic" style="left:715px;top:42.5px" viewBox="0 0 16 16" width="16" height="16"><path fill="#767676" d="M10.072 8.024L5.715 3.667l.618-.62L11 7.716v.618L6.333 13l-.618-.619 4.357-4.357z"/></svg>
<svg class="ic" style="left:646.3px;top:42.5px" viewBox="0 0 16 16" width="16" height="16"><circle cx="8" cy="8" r="6" fill="#b8383d"/><path d="M9.200 5v4.100c0 1.300-.7 1.950-1.900 1.950-.5 0-.9-.08-1.250-.25l.25-1.150c.25.120.5.200.8.200.45 0 .7-.2.7-.85V5z" fill="#fff"/></svg>
<div class="t " style="left:731.2px;top:40.3px;font-size:13px;color:#767676;transform:scaleX(0.7077);transform-origin:0 50%;">…</div>
<div class="ln" style="top:61.5px;color:#237893">1</div>
<div class="code" style="top:61.5px"><span style="color:#0000ff">package</span><span style="color:#000000"> </span><span style="color:#267f99">com</span><span style="color:#000000">.</span><span style="color:#267f99">mycompany</span><span style="color:#000000">.</span><span style="color:#267f99">app</span><span style="color:#000000">;</span></div>
<div class="ln" style="top:80.5px;color:#237893">2</div>
<div class="ln" style="top:99.5px;color:#237893">3</div>
<div class="code" style="top:99.5px"><span style="color:#008000">/**</span></div>
<div class="ln" style="top:118.5px;color:#237893">4</div>
<div class="code" style="top:118.5px"><span style="color:#008000"> * Hello world!</span></div>
<div class="ln" style="top:137.5px;color:#237893">5</div>
<div class="code" style="top:137.5px"><span style="color:#008000"> *</span></div>
<div class="ln" style="top:156.5px;color:#237893">6</div>
<div class="code" style="top:156.5px"><span style="color:#008000"> */</span></div>
<div class="ln" style="top:175.5px;color:#237893">7</div>
<div class="code" style="top:175.5px"><span style="color:#0000ff">public</span><span style="color:#000000"> </span><span style="color:#0000ff">class</span><span style="color:#000000"> </span><span style="color:#267f99">App</span></div>
<div class="ln" style="top:194.5px;color:#237893">8</div>
<div class="code" style="top:194.5px"><span style="color:#000000">{</span></div>
<div class="ln" style="top:232.5px;color:#237893">9</div>
<div class="code" style="top:232.5px"><span style="color:#000000">    </span><span style="color:#0000ff">public</span><span style="color:#000000"> </span><span style="color:#0000ff">static</span><span style="color:#000000"> </span><span style="color:#0000ff">void</span><span style="color:#000000"> </span><span style="color:#795e26">main</span><span style="color:#000000">( </span><span style="color:#267f99">String</span><span style="color:#000000">[] </span><span style="color:#001080">args</span><span style="color:#000000"> )</span></div>
<div class="ln" style="top:251.5px;color:#237893">10</div>
<div class="code" style="top:251.5px"><span style="color:#000000">    {</span></div>
<div class="ln" style="top:270.5px;color:#237893">11</div>
<div class="code" style="top:270.5px"><span style="color:#000000">        </span><span style="color:#267f99">System</span><span style="color:#000000">.</span><span style="color:#0070c1">out</span><span style="color:#000000">.</span><span style="color:#795e26">println</span><span style="color:#000000">( </span><span style="color:#a31515">"Hello World!"</span><span style="color:#000000"> );</span></div>
<div class="ln" style="top:289.5px;color:#237893">12</div>
<div class="code" style="top:289.5px"><span style="color:#000000">    }</span></div>
<div class="ln" style="top:308.5px;color:#237893">13</div>
<div class="code" style="top:308.5px"><span style="color:#000000">}</span></div>
<div class="ln" style="top:327.5px;color:#0b216f">14</div>
<div class="t " style="left:447.1px;top:212.3px;font-size:12px;color:#999999;letter-spacing:-0.179px;">Run | Debug</div>
<div class="t " style="left:370.1px;top:703.3px;font-size:11px;color:#757575;transform:scaleX(0.8734);transform-origin:0 50%;">PROBLEMS</div>
<div class="t " style="left:447.9px;top:703.3px;font-size:11px;color:#757575;transform:scaleX(0.8998);transform-origin:0 50%;">OUTPUT</div>
<div class="t " style="left:513px;top:703.3px;font-size:11px;color:#424242;transform:scaleX(0.9079);transform-origin:0 50%;">TERMINAL</div>
<div class="t " style="left:588.2px;top:703.3px;font-size:11px;color:#757575;transform:scaleX(0.8878);transform-origin:0 50%;">DEBUG CONSOLE</div>
<div class="term" style="top:736.5px"><span style="color:#0598bc">oy\code\pepe\my-app'</span><span style="color:#333333">; &amp; </span><span style="color:#0598bc">'c:\Users\manuel.bascoy\.vscode\extensions\vscjava.vscode-java-debug-0.30.0</span></div>
<div class="term" style="top:753.5px"><span style="color:#0598bc">va.exe' '-XX:+ShowCodeDetailsInExceptionMessages' '-Dfile.encoding=UTF-8' '-cp' 'C:\Users\manuel</span></div>
<div class="term" style="top:770.5px"><span style="color:#0598bc">p'</span></div>
<div class="term" style="top:787.5px"><span style="color:#333333">Error: Could not find or load main class com.mycompany.app.App</span></div>
<div class="term" style="top:804.5px"><span style="color:#333333">Caused by: java.lang.ClassNotFoundException: com.mycompany.app.App</span></div>
<svg class="ic" style="left:0;top:0" width="983" height="814" viewBox="0 0 983 814">
<path d="M796.1 378.5 L793.5 387.6 L790.1 396.1 L786.0 404.1 L781.3 411.6 L776.1 418.8 L770.4 425.6 L764.4 432.2 L758.2 438.6 L751.6 444.8 L744.9 450.8 L738.1 456.7 L731.1 462.6 L724.0 468.3 L716.9 473.9 L709.7 479.5 L702.4 485.0 L695.1 490.5 L687.8 495.9 L680.5 501.2 L673.1 506.4 L665.7 511.6 L658.3 516.7 L650.8 521.7 L643.3 526.7 L635.8 531.5 L628.2 536.3 L620.5 540.9 L612.8 545.5 L605.0 550.0 L597.2 554.3 L589.3 558.6 L581.4 562.8 L573.3 566.9 L565.3 570.9 L557.1 574.8 L549.0 578.6 L540.7 582.4 L532.5 586.1 L524.2 589.8 L515.9 593.4 L507.5 597.0 L499.2 600.5 L490.8 604.1 L482.5 607.6 L474.1 611.2 L465.8 614.7 L457.6 618.3 L449.3 621.9 L441.1 625.5 L432.9 629.2 L424.7 632.8 L416.5 636.4 L408.4 640.1 L400.2 643.7 L391.9 647.2 L383.6 650.7 L375.1 654.0 L366.5 657.2 L357.7 660.1" fill="none" stroke="#fc0606" stroke-width="5.6" stroke-linecap="round" stroke-linejoin="round"/>
<path d="M348 662.600 L364 648.600 L367.800 664.300 Z" fill="#fc0606" stroke="#fc0606" stroke-width="4.500" stroke-linejoin="round"/>
</svg>
</div>
</body></html>
